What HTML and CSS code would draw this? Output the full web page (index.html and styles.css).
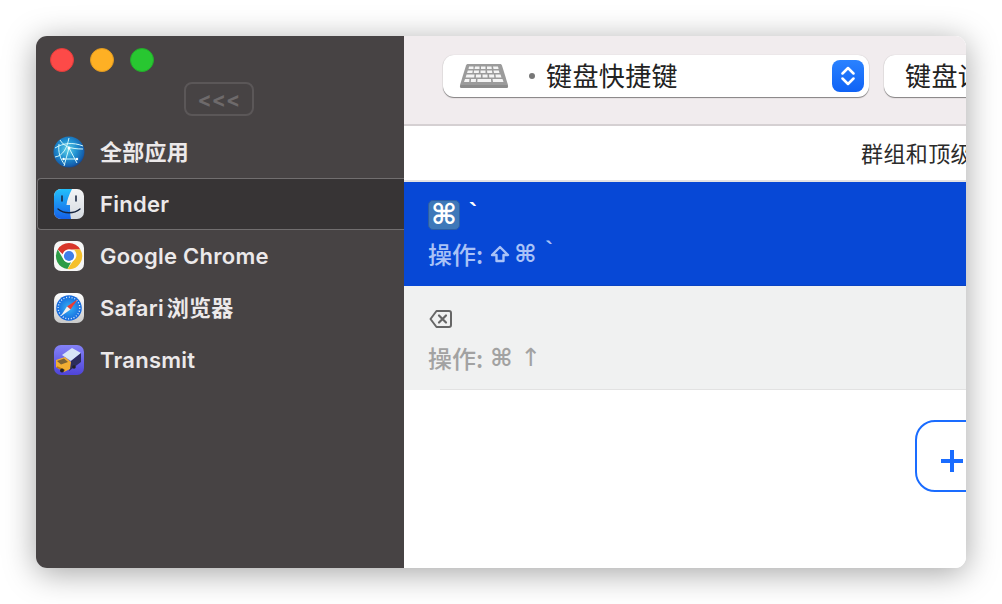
FILE: index.html
```html
<!DOCTYPE html>
<html lang="zh">
<head>
<meta charset="utf-8">
<title>键盘快捷键</title>
<link rel="stylesheet" href="styles.css">
</head>
<body>
<div class="window">
  <aside class="sidebar">
    <div class="lights">
      <span class="light red"></span>
      <span class="light amber"></span>
      <span class="light green"></span>
    </div>
    <div class="collapse-wrap"><button class="collapse">&lt;&lt;&lt;</button></div>
    <ul class="apps">
      <li class="app">
        <svg class="app-icon" viewBox="0 0 32 32">
          <defs>
            <radialGradient id="globe" cx="45%" cy="42%" r="62%">
              <stop offset="0" stop-color="#5fd0e6"/><stop offset=".5" stop-color="#1f8fd0"/><stop offset=".85" stop-color="#1460ae"/><stop offset="1" stop-color="#163a7a"/>
            </radialGradient>
          </defs>
          <circle cx="16" cy="16" r="15.500" fill="url(#globe)"/>
          <g fill="none" stroke="#d4f8fb" stroke-width="1">
            <path d="M2 12C10 7 20 6 30 10M2 21c8-1 12-9 14-19M7 4c4 6 9 9 23 9M16 12l-5 18M16 12l8 15M10 23l15 0M6 8c-1 8 1 15 6 21"/>
          </g>
          <circle cx="16" cy="12" r="1.500" fill="#fff"/><circle cx="10.500" cy="23" r="1.200" fill="#fff"/><circle cx="24" cy="23" r="1.200" fill="#fff"/>
        </svg>
        <span class="app-name cjk">全部应用</span>
      </li>
      <li class="app selected">
        <svg class="app-icon" viewBox="0 0 32 32">
          <defs>
            <linearGradient id="fblue" x1="0" y1="0" x2="0" y2="1"><stop offset="0" stop-color="#23c0fb"/><stop offset="1" stop-color="#1560e8"/></linearGradient>
            <linearGradient id="fgray" x1="0" y1="0" x2="0" y2="1"><stop offset="0" stop-color="#f4f5f6"/><stop offset="1" stop-color="#d5dae0"/></linearGradient>
            <clipPath id="fclip"><rect x="1" y="1" width="30" height="30" rx="7"/></clipPath>
          </defs>
          <g clip-path="url(#fclip)">
            <rect x="1" y="1" width="30" height="30" fill="url(#fgray)"/>
            <path d="M1 1h18c-3 6-5 11-5.500 16H17c0 5 0 9 1 14H1z" fill="url(#fblue)"/>
          </g>
          <path d="M9 8v5M23 8v5" stroke="#1c2a44" stroke-width="1.600" stroke-linecap="round"/>
          <path d="M5 21c6 5 16 5 22 0" fill="none" stroke="#16243e" stroke-width="1.400" stroke-linecap="round"/>
        </svg>
        <span class="app-name">Finder</span>
      </li>
      <li class="app">
        <svg class="app-icon" viewBox="0 0 32 32">
          <rect x="1" y="1" width="30" height="30" rx="7" fill="#f6f6f6"/>
          <path d="M16 3a13 13 0 0 1 11.300 6.500H16a6.500 6.500 0 0 0-6.200 4.700L4.700 9.500A13 13 0 0 1 16 3z" fill="#d8352a"/>
          <path d="M4.700 9.500l5.600 9.800A6.500 6.500 0 0 0 18 22.200L14.500 29A13 13 0 0 1 4.700 9.500z" fill="#2d9c46"/>
          <path d="M27.300 9.500A13 13 0 0 1 14.500 29l5.900-8.500A6.500 6.500 0 0 0 20.500 9.500z" fill="#f5c02c"/>
          <circle cx="16" cy="16" r="6.400" fill="#fff"/>
          <circle cx="16" cy="16" r="5.100" fill="#3f7ee8"/>
        </svg>
        <span class="app-name">Google Chrome</span>
      </li>
      <li class="app">
        <svg class="app-icon" viewBox="0 0 32 32">
          <defs>
            <linearGradient id="safbg" x1="0" y1="0" x2="0" y2="1"><stop offset="0" stop-color="#fff"/><stop offset="1" stop-color="#c9c9c9"/></linearGradient>
            <radialGradient id="safblue"><stop offset="0" stop-color="#37b4f5"/><stop offset="1" stop-color="#1466dc"/></radialGradient>
          </defs>
          <rect x="1" y="1" width="30" height="30" rx="7" fill="url(#safbg)"/>
          <circle cx="16" cy="16" r="12.800" fill="url(#safblue)"/>
          <circle cx="16" cy="16" r="10.800" fill="none" stroke="#e4f1fd" stroke-width="1.300" stroke-dasharray="1 1.800"/>
          <path d="M24.500 7.500L14 14.500l3.500 3z" fill="#ee3b32"/>
          <path d="M7.500 24.500L14 14.500l3.500 3z" fill="#f1f1f1"/>
        </svg>
        <span class="app-name cjk">Safari 浏览器</span>
      </li>
      <li class="app">
        <svg class="app-icon" viewBox="0 0 32 32">
          <defs>
            <linearGradient id="trbg" x1="0" y1="0" x2="0" y2="1"><stop offset="0" stop-color="#8482f7"/><stop offset="1" stop-color="#4f44d8"/></linearGradient>
          </defs>
          <rect x="1" y="1" width="30" height="30" rx="7" fill="url(#trbg)"/>
          <path d="M9 11l10-7 9 5-10 8z" fill="#d7e5f6"/>
          <path d="M18 17l10-8v9l-12 9z" fill="#2c2d5c"/>
          <path d="M3 16l9-3 6 5-1 7-6 3-8-5z" fill="#f2ae33"/>
          <path d="M4 17l7-2.500 4 3.500-7 2.500z" fill="#7b6236"/>
          <path d="M4 23l8 3.500" stroke="#b67914" stroke-width="1.500"/>
          <circle cx="9" cy="26.500" r="2" fill="#222"/><circle cx="21" cy="23" r="1.800" fill="#222"/>
        </svg>
        <span class="app-name">Transmit</span>
      </li>
    </ul>
  </aside>
  <main class="main">
    <div class="toolbar">
      <div class="select primary">
        <svg class="keyboard" viewBox="0 0 50 26">
          <path d="M9 1h32c1 0 1.600.500 2 1.500l6 19.500c.300 2-.500 3-2 3H3c-1.500 0-2.300-1-2-3L7 2.500C7.400 1.500 8 1 9 1z" fill="#9b9b9b"/>
          <g fill="#f4f4f4">
            <path d="M10 3.500h4.500v2.500H9.500zM16 3.500h4.500v2.500H15.500zM22 3.500h4.500v2.500H22zM28 3.500h4.500l.3 2.500H28zM34 3.500h5l.6 2.500H34.500z"/>
            <path d="M8.800 7.500h5l-.4 2.500H8zM15 7.500h5l-.2 2.500h-5zM21.500 7.500h5v2.500h-5zM28 7.500h5l.3 2.500h-5zM34.500 7.500h5.300l.7 2.500h-5.500z"/>
            <path d="M7.500 11.500h8l-.3 3H6.600zM17 11.500h5l-.1 3h-5zM23.500 11.500h5l.1 3h-5zM30 11.500h5l.3 3h-5zM36.500 11.500h5l1 3h-5.700z"/>
            <path d="M6 16h4.500l-.3 3H5zM12 16h5l-.2 3h-5zM18.500 16h13.500l.2 3H18.300zM33.500 16h10l1 3H34z"/>
          </g>
          <rect x="1" y="22" width="48" height="3" rx="1.500" fill="#8b8b8b"/>
        </svg>
        <span class="dot"></span>
        <span class="select-label">键盘快捷键</span>
        <span class="stepper">
          <svg viewBox="0 0 14 20" class="stepper-icon"><path d="M1.500 7.500L7 2l5.500 5.500M1.500 12.500L7 18l5.500-5.500" fill="none" stroke="#fff" stroke-width="2.500" stroke-linecap="round" stroke-linejoin="round"/></svg>
        </span>
      </div>
      <div class="select secondary"><span class="select-label">键盘设置</span></div>
    </div>
    <div class="group-head"><span class="group-title">群组和顶级菜单</span></div>
    <div class="row active">
      <div class="keys"><span class="keycap">⌘</span><span class="tick">`</span></div>
      <div class="action"><span>操作:</span><svg class="shift" viewBox="0 0 20 18"><path d="M10 2l8 8h-4.500v6h-7v-6H2z" fill="none" stroke="currentColor" stroke-width="2.400" stroke-linejoin="round"/></svg><span class="glyph after-shift">⌘</span><span class="glyph-tick">`</span></div>
    </div>
    <div class="row muted">
      <div class="keys">
        <svg class="delete" viewBox="0 0 24 20"><path d="M7.500 2H20a2 2 0 0 1 2 2v12a2 2 0 0 1-2 2H7.500L1.500 10z" fill="none" stroke="currentColor" stroke-width="2" stroke-linejoin="round"/><path d="M10 6.500l7 7M17 6.500l-7 7" stroke="currentColor" stroke-width="2.200" stroke-linecap="round"/></svg>
      </div>
      <div class="action"><span>操作:</span><span class="glyph">⌘</span><span class="glyph arrow">↑</span></div>
    </div>
    <div class="add-wrap">
      <div class="add"><span class="plus"></span></div>
    </div>
  </main>
</div>
</body>
</html>
```

FILE: styles.css
```css
* { box-sizing: border-box; }
html, body { margin: 0; height: 100%; }
body {
  background: #fff;
  padding: 36px;
  overflow: hidden;
  font-family: Inter, "Noto Sans CJK SC", sans-serif;
}
.window {
  display: flex;
  width: 930px;
  height: 532px;
  border-radius: 11px;
  overflow: hidden;
  box-shadow: 0 5px 32px rgba(0, 0, 0, .36);
}
.sidebar {
  flex: 0 0 368px;
  background: #474344;
  padding-top: 12px;
}
.lights { display: flex; gap: 16px; padding-left: 14px; }
.light { width: 24px; height: 24px; border-radius: 50%; }
.red { background: #fd4a48; border: 1px solid #e33c3a; }
.amber { background: #feb024; border: 1px solid #e09a20; }
.green { background: #28c731; border: 1px solid #22ad2a; }
.collapse-wrap { padding: 10px 0 0 148px; }
.collapse {
  display: block;
  width: 70px;
  height: 34px;
  padding: 0;
  border: 2px solid #5b5758;
  border-radius: 8px;
  background: none;
  color: #6e6a6b;
  font: 700 21px/29px Inter, sans-serif;
}
.apps { list-style: none; margin: 10px 0 0; padding: 0 0 0 1px; }
.app {
  display: flex;
  align-items: center;
  height: 52px;
  padding-left: 15px;
  border: 1px solid transparent;
  border-right: 0;
}
.app.selected {
  background: #373435;
  border-color: #716e6f;
  border-radius: 4px 0 0 4px;
}
.app-icon { width: 32px; height: 32px; flex: none; }
.app-name {
  margin-left: 15px;
  color: #ece9ea;
  font-size: 22px;
  font-weight: 600;
  letter-spacing: .25px;
  white-space: nowrap;
}
.app-name.cjk { margin-bottom: 4px; word-spacing: -3px; }
.main {
  flex: 1;
  min-width: 0;
  display: flex;
  flex-direction: column;
  background: #fff;
}
.toolbar {
  flex: none;
  display: flex;
  gap: 15px;
  height: 90px;
  padding: 19px 0 0 39px;
  background: #f1ecee;
  border-bottom: 2px solid #d5d0d2;
}
.select {
  flex: none;
  display: flex;
  align-items: center;
  height: 42px;
  background: #fff;
  border-radius: 11px;
  box-shadow: 0 1px 1px rgba(0, 0, 0, .45), 0 0 1px rgba(0, 0, 0, .2);
}
.primary { width: 426px; padding: 0 5px 0 16px; }
.secondary { width: 200px; padding-left: 21px; }
.keyboard { width: 50px; height: 26px; flex: none; }
.dot { width: 6px; height: 6px; margin: 0 11px 0 20px; border-radius: 50%; background: #777; flex: none; }
.select-label {
  margin-bottom: 4px;
  font-size: 26px;
  color: #222;
  font-family: "Noto Sans CJK SC", sans-serif;
  white-space: nowrap;
  letter-spacing: .4px;
}
.stepper {
  margin-left: auto;
  display: flex;
  align-items: center;
  justify-content: center;
  width: 32px;
  height: 32px;
  border-radius: 8px;
  background: linear-gradient(#2a82ff, #0f62f5);
}
.stepper-icon { width: 14px; height: 20px; }
.group-head {
  flex: none;
  height: 56px;
  padding-left: 457px;
  border-bottom: 2px solid #e4e3e3;
  white-space: nowrap;
}
.group-title { font: 22px/52px "Noto Sans CJK SC", sans-serif; color: #2b2b2b; letter-spacing: .4px; }
.row { flex: none; height: 104px; padding: 17px 0 0 24px; }
.row.active {
  background: linear-gradient(#0a43c2, #0a43c2) 36px 100% / 100% 1px no-repeat, #0748d6;
  color: #a9c2f7;
}
.row.muted {
  background: linear-gradient(#e2e2e2, #e2e2e2) 36px 100% / 100% 1px no-repeat, #f0f1f1;
  color: #a2a2a2;
}
.keys { display: flex; align-items: center; height: 32px; }
.keycap {
  display: flex;
  align-items: center;
  justify-content: center;
  width: 32px;
  height: 30px;
  border-radius: 5px;
  background: #3e78b9;
  border: 1px solid #2b5da5;
  color: #fff;
  font: 700 28px/1 "DejaVu Sans", sans-serif;
}
.tick { margin: -6px 0 0 9px; color: #fff; font: 700 24px/1 "Liberation Sans", sans-serif; }
.delete { width: 24px; height: 20px; margin-left: 1px; color: #666; }
.action {
  margin-top: 7px;
  display: flex;
  align-items: center;
  height: 32px;
  font: 500 24px/32px "Noto Sans CJK SC", "DejaVu Sans", sans-serif;
  white-space: pre;
}
.shift { width: 20px; height: 18px; margin-left: 7px; }
.glyph { margin-left: 7px; font: 700 24px/32px "DejaVu Sans", sans-serif; }
.glyph.after-shift { margin-left: 4px; }
.glyph.arrow { margin-left: 8px; font-size: 25px; font-weight: 400; }
.glyph-tick { margin: -8px 0 0 9px; font: 700 22px/1 "Liberation Sans", sans-serif; }
.add-wrap { padding: 30px 0 0 511px; }
.add {
  position: relative;
  width: 100px;
  height: 72px;
  border: 2px solid #1a6cff;
  border-radius: 20px;
}
.plus {
  position: absolute;
  left: 24px;
  top: 28px;
  width: 22px;
  height: 22px;
  background:
    linear-gradient(#1a6cff, #1a6cff) center / 22px 4px no-repeat,
    linear-gradient(#1a6cff, #1a6cff) center / 4px 22px no-repeat;
}
```
